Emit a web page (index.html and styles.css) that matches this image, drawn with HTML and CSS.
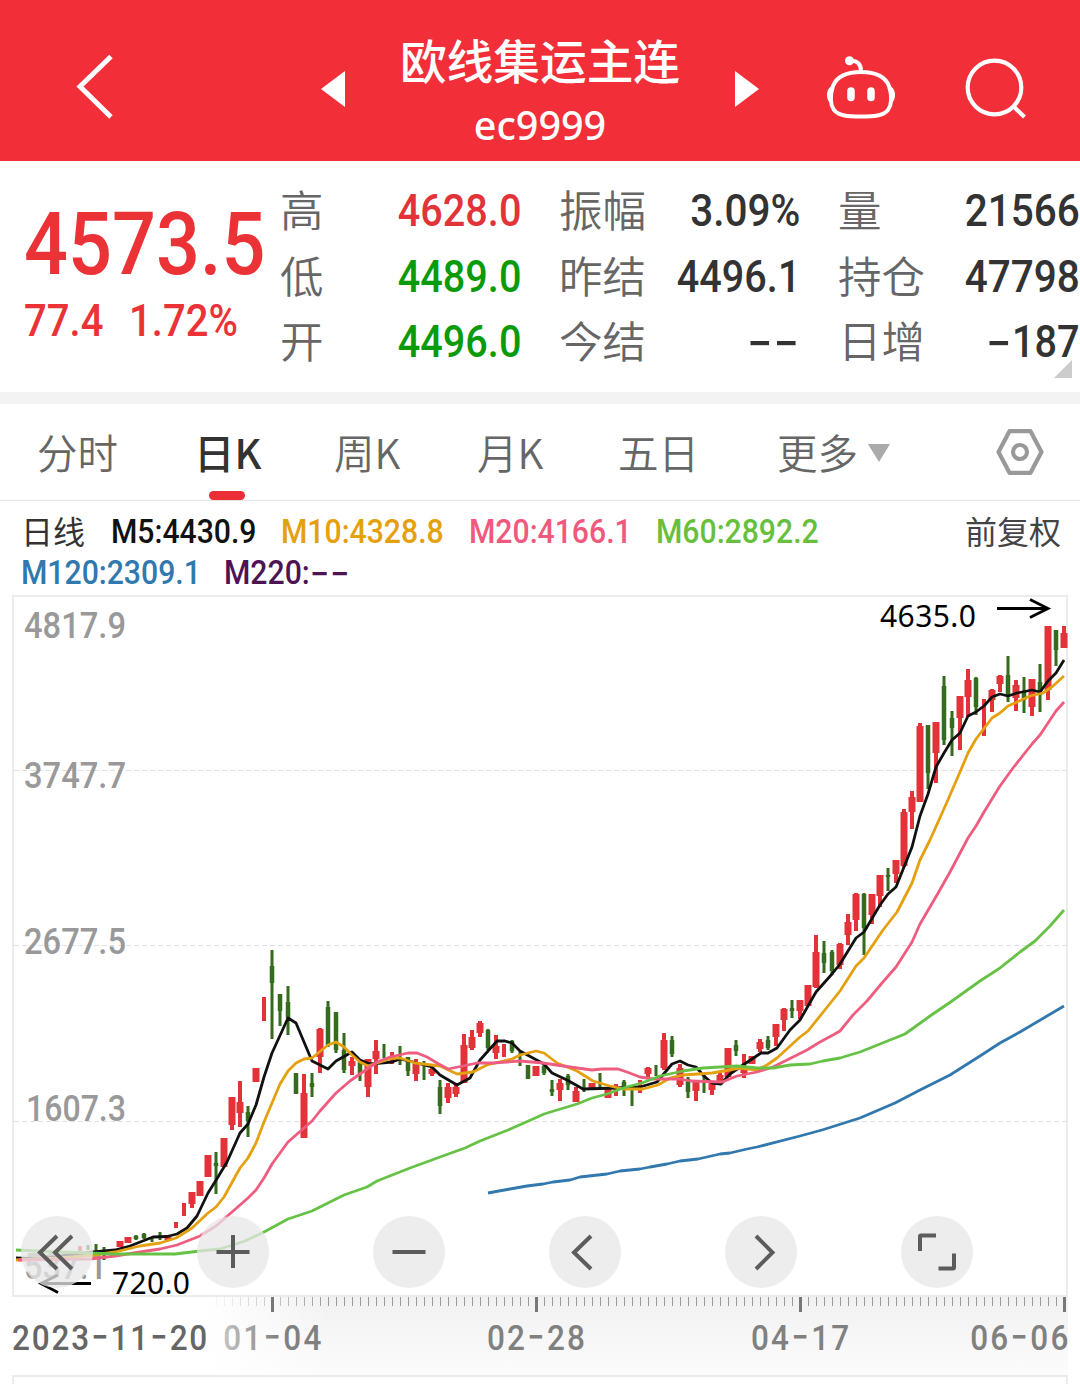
FILE: index.html
```html
<!DOCTYPE html>
<html lang="zh-CN">
<head>
<meta charset="utf-8">
<title>欧线集运主连 ec9999</title>
<link rel="stylesheet" href="styles.css">
</head>
<body>
<header class="topbar">
  <svg class="cell" viewBox="0 0 300 161" fill="none" stroke="#fff" stroke-width="5"><path d="M111 56.5 80 86.5 111 117"/></svg>
  <svg class="cell" viewBox="300 0 70 161"><path d="M321 89 345 71V107Z" fill="#fff"/></svg>
  <div class="title"><h1>欧线集运主连</h1><p>ec9999</p></div>
  <svg class="cell" viewBox="710 0 80 161"><path d="M759 89 735 71V107Z" fill="#fff"/></svg>
  <svg class="cell" viewBox="790 0 130 161" fill="none" stroke="#fff" stroke-width="4">
    <path d="M861 72C874 72 885 76 889 86C892 95 892 104 888 110C883 116 874 116.500 861 116.500S839 116 834 110C830 104 830 95 833 86C837 76 848 72 861 72Z"/>
    <path d="M850 61C857 60 861 64 861 71"/>
    <circle cx="849.500" cy="60.700" r="4.500" fill="#fff" stroke="none"/>
    <path d="M832 86.500C826 88 826 102 832 103.500ZM890 86.500C896 88 896 102 890 103.500Z" fill="#fff" stroke-width="1"/>
    <path d="M851 91V97.500M871 91V97.500" stroke-width="7.500" stroke-linecap="round"/>
  </svg>
  <svg class="cell" viewBox="920 0 160 161" fill="none" stroke="#fff" stroke-width="4.200"><circle cx="994.500" cy="87.500" r="26.800"/><path d="M1013 106 1024.500 117"/></svg>
</header>

<section class="quote">
  <div class="price">
    <div class="last"><span class="num">4573.5</span></div>
    <div class="change"><span class="num">77.4</span><span class="num">1.72%</span></div>
  </div>
  <dl class="stats">
    <div><dt>高</dt><dd class="up">4628.0</dd></div>
    <div><dt>振幅</dt><dd class="wide">3.09%</dd></div>
    <div><dt>量</dt><dd class="wide">21566</dd></div>
    <div><dt>低</dt><dd class="down">4489.0</dd></div>
    <div><dt>昨结</dt><dd>4496.1</dd></div>
    <div><dt>持仓</dt><dd class="wide">47798</dd></div>
    <div><dt>开</dt><dd class="down">4496.0</dd></div>
    <div><dt>今结</dt><dd><span class="dash">--</span></dd></div>
    <div><dt>日增</dt><dd><span class="dash">-</span>187</dd></div>
  </dl>
  <i class="corner"></i>
</section>

<nav class="tabs">
  <a>分时</a><a class="on">日K</a><a>周K</a><a>月K</a><a>五日</a><a>更多<i class="caret"></i></a>
  <svg class="gear" viewBox="0 0 48 48" fill="none" stroke="#999" stroke-width="4.200" stroke-linejoin="round"><path d="M13.500 3.200H34.500L45.500 24 34.500 44.800H13.500L2.500 24Z"/><circle cx="24" cy="24" r="7"/></svg>
</nav>

<section class="legend">
  <div class="row"><b>日线</b><span class="num m5">M5:4430.9</span><span class="num m10">M10:4328.8</span><span class="num m20">M20:4166.1</span><span class="num m60">M60:2892.2</span><em>前复权</em></div>
  <div class="row"><span class="num m120">M120:2309.1</span><span class="num m220">M220:<span class="dash">--</span></span></div>
</section>

<main class="chart">
<svg class="plot" viewBox="0 595 1080 789">
  <defs>
    <linearGradient id="down" x1="0" y1="0" x2="0" y2="1"><stop offset="0" stop-color="#f1f1f1"/><stop offset="1" stop-color="#fcfcfc"/></linearGradient>
    <linearGradient id="fade" gradientUnits="userSpaceOnUse" x1="205" y1="0" x2="330" y2="0"><stop offset="0" stop-color="#fff"/><stop offset="1" stop-color="#fff" stop-opacity="0"/></linearGradient>
    <linearGradient id="textfade" gradientUnits="userSpaceOnUse" x1="239" y1="0" x2="310" y2="0"><stop offset="0" stop-color="#ccc"/><stop offset="1" stop-color="#808080"/></linearGradient>
    <pattern id="tick" x="216" y="1297" width="8" height="10" patternUnits="userSpaceOnUse"><path d="M.5 0V9" stroke="#999"/></pattern>
  </defs>
  <rect x="12" y="1297" width="1056" height="78" fill="url(#down)"/>
  <rect x="216" y="1297" width="852" height="9" fill="url(#tick)"/>
  <rect x="12" y="1297" width="400" height="78" fill="url(#fade)"/>
  <path d="M272.500 1297V1312M536.500 1297V1312M800.500 1297V1312M1064.500 1297V1312" stroke="#777" stroke-width="3"/>
  <path d="M13 1296V596H1067V1296ZM13 1384V1376H1067V1384" fill="none" stroke="#ebebeb" stroke-width="2"/>
  <path d="M14 770.500H1066M14 945.500H1066M14 1121.500H1066" stroke="#e0e0e0" stroke-dasharray="5 3"/>
  <g class="scale">
    <text x="24" y="638" textLength="102" lengthAdjust="spacingAndGlyphs">4817.9</text>
    <text x="24" y="788" textLength="102" lengthAdjust="spacingAndGlyphs">3747.7</text>
    <text x="24" y="954" textLength="102" lengthAdjust="spacingAndGlyphs">2677.5</text>
    <text x="26" y="1121" textLength="100" lengthAdjust="spacingAndGlyphs">1607.3</text>
    <text x="24" y="1279" textLength="83" lengthAdjust="spacingAndGlyphs">537.1</text>
  </g>
  <!-- candles: wicks, then bodies -->
  <path class="rw" d="M80 1246V1251M176 1222V1228M184 1203V1216M192 1192V1208M232 1097V1130M240 1081V1127M264 997V1021M304 1074V1138M320 1028V1073M352 1057V1075M368 1059V1097M376 1040V1074M392 1052V1064M416 1059V1081M432 1067V1076M448 1083V1103M456 1085V1097M464 1034V1083M472 1030V1050M480 1021V1037M496 1035V1059M504 1044V1057M560 1079V1101M576 1087V1102M616 1084V1096M640 1080V1093M648 1067V1077M664 1033V1070M680 1064V1087M696 1082V1101M712 1082V1095M720 1073V1083M744 1054V1078M760 1039V1052M776 1024V1046M784 1008V1031M800 1000V1019M816 935V988M840 943V969M848 914V945M856 893V931M872 894V924M880 875V907M896 860V883M904 809V867M912 791V829M920 723V802M936 722V783M960 696V750M968 669V717M984 699V736M992 689V712M1000 675V692M1016 680V711M1032 679V716M1048 626V700M1064 626V648"/>
  <path class="rb" d="M120 1241V1247M128 1237V1243M168 1237V1240M192 1192V1204M200 1181V1196M208 1155V1177M224 1138V1167M232 1097V1125M240 1102V1113M256 1068V1082M304 1093V1138M320 1029V1057M352 1061V1066M368 1059V1087M376 1051V1059M416 1064V1074M432 1069V1074M448 1087V1098M456 1087V1094M464 1045V1083M472 1037V1048M480 1023V1033M496 1046V1053M536 1066V1076M560 1083V1090M576 1091V1102M592 1083V1088M608 1088V1098M648 1068V1074M664 1040V1068M680 1068V1085M696 1082V1091M712 1082V1090M720 1075V1082M728 1048V1077M744 1068V1073M752 1056V1064M760 1042V1049M776 1024V1037M784 1009V1020M800 1000V1011M808 985V1006M816 952V987M840 944V965M848 922V935M856 894V920M872 894V915M880 875V896M896 860V874M904 812V866M912 797V812M920 726V802M936 722V753M960 696V718M968 680V697M992 690V700M1000 676V684M1016 685V698M1032 679V707M1048 626V690M1064 633V648"/>
  <path class="gw" d="M88 1245V1250M96 1244V1252M104 1247V1260M136 1235V1240M144 1233V1239M152 1237V1242M160 1232V1240M216 1152V1194M248 1106V1137M272 950V1039M280 994V1026M288 986V1035M312 1073V1097M328 1001V1047M336 1012V1053M344 1033V1073M360 1062V1081M384 1044V1058M400 1046V1065M408 1057V1076M424 1061V1080M440 1080V1114M488 1029V1050M512 1040V1053M520 1052V1066M544 1064V1075M552 1080V1096M568 1074V1090M584 1079V1092M600 1073V1087M624 1080V1096M632 1089V1106M656 1065V1076M672 1036V1057M688 1077V1098M704 1075V1093M736 1040V1056M768 1036V1050M792 1000V1018M824 941V973M832 950V975M864 893V955M888 868V891M928 725V789M944 676V745M952 711V756M976 677V715M1008 656V702M1024 677V713M1040 664V712M1056 630V666"/>
  <path class="gb" d="M136 1236V1239M144 1234V1238M216 1163V1166M248 1112V1121M272 966V983M280 994V1011M288 1002V1018M296 1073V1094M312 1083V1087M328 1007V1045M336 1012V1050M344 1050V1070M360 1062V1074M408 1057V1071M440 1087V1106M488 1030V1048M512 1041V1051M528 1065V1079M544 1066V1073M552 1089V1092M568 1076V1085M624 1082V1090M672 1040V1054M688 1079V1092M736 1045V1051M768 1040V1048M792 1008V1011M824 953V963M832 952V971M864 894V928M888 875V877M928 725V773M944 686V740M952 718V728M976 678V707M1008 675V695M1024 691V700M1040 682V695M1056 630V650"/>
  <!-- moving averages -->
  <polyline class="ma k" points="16,1258 40,1259 70,1255 93,1252 115,1250 130,1246 153,1237 167,1236.500 177,1234 187,1228 197,1216 208,1193 218,1177 227,1162 240,1133 248,1124 256,1105 264,1077 272,1053 288,1018 296,1023 312,1061 328,1069 336,1061 352,1052 360,1060 370,1064 392,1062 400,1059 413,1062 432,1067 440,1075 457,1085 470,1078 480,1060 497,1041 505,1041 512,1043 520,1051 544,1064 552,1073 567,1080 583,1089 617,1088 640,1087 657,1082 672,1064 680,1061 688,1065 696,1067 704,1076 712,1083 721,1084 730,1074 743,1065 761,1053 768,1053 777,1048 790,1030 800,1020 808,1006 816,992 824,983 832,974 840,964 848,951 856,938 864,932 880,905 888,894 896,887 904,867 912,847 920,816 928,794 936,767 944,753 952,740 960,733 968,716 976,712 984,706 992,697 1000,694 1008,696 1017,693 1032,690 1040,692 1048,681 1056,673 1064,660"/>
  <polyline class="ma o" points="16,1260 60,1258 95,1255 115,1252 140,1246 160,1243 176,1238 192,1228 208,1213 216,1207 224,1197 240,1168 248,1158 256,1143 264,1122 272,1103 280,1084 288,1071 296,1063 304,1059 312,1058 328,1045 336,1042 344,1047 352,1055 360,1062 368,1066 377,1063 393,1058 400,1058 415,1063 440,1066 457,1074 473,1072 487,1065 512,1059 520,1055 536,1051 544,1053 557,1063 577,1071 593,1081 610,1086 623,1089 643,1089 658,1085 670,1078 683,1075 712,1073 740,1068 757,1070 767,1065 777,1058 800,1037 808,1031 824,1011 840,991 856,966 864,958 883,930 897,912 912,883 920,860 930,840 947,802 960,772 968,753 976,739 992,718 1000,713 1008,706 1017,702 1030,696 1043,693 1053,686 1064,676"/>
  <polyline class="ma p" points="18,1260 90,1259 115,1256 140,1252 160,1249 177,1245 200,1236 216,1226 232,1212 248,1198 256,1190 264,1178 272,1164 288,1142 312,1121 320,1111 336,1093 350,1081 367,1069 377,1062 390,1057 408,1053 417,1053 427,1057 437,1063 448,1069 463,1066 477,1063 493,1063 520,1061 543,1063 570,1067 592,1070 602,1069 618,1069 627,1072 640,1077 653,1079 680,1079 690,1081 722,1082 737,1076 757,1072 773,1067 787,1060 807,1050 820,1042 833,1035 840,1031 853,1015 867,1001 882,983 896,967 912,942 920,924 937,895 950,872 968,838 976,826 984,812 1000,786 1013,768 1032,744 1040,735 1056,711 1064,702"/>
  <polyline class="ma g" points="16,1250 60,1252 115,1254 175,1254 200,1251 220,1249 245,1241 264,1232 288,1219 312,1211 328,1203 344,1195 367,1187 377,1181 410,1168 440,1157 465,1148 480,1141 508,1130 533,1119 544,1114 567,1107 577,1104 592,1098 607,1094 623,1088 642,1083 660,1076 683,1071 703,1068 737,1066 757,1068 773,1068 790,1065 810,1064 823,1061 840,1058 860,1052 880,1044 905,1034 930,1016 952,1001 980,981 1000,968 1020,952 1035,941 1050,926 1064,910"/>
  <polyline class="ma b" points="488,1193 510,1189 527,1186 543,1184 553,1182 570,1180 580,1177 607,1174 620,1171 640,1169 650,1167 667,1164 680,1161 698,1159 720,1154 730,1153 747,1149 757,1147 800,1136 822,1130 860,1118 895,1103 920,1090 950,1075 980,1056 1000,1043 1020,1032 1064,1006"/>
  <path class="arrow" d="M997 608.500H1048M1030 599.500 1048 608.500 1030 617.500M91 1283.500H41M58 1275 41 1283.500 58 1292.500"/>
  <g class="mark"><text x="880" y="627" textLength="96">4635.0</text><text x="112" y="1293.500" textLength="78">720.0</text></g>
  <g class="dates" transform="scale(.9 1)">
    <text x="13.300" y="1350" fill="#666" textLength="217">2023<tspan class="dash">-</tspan>11<tspan class="dash">-</tspan>20</text>
    <text x="248" y="1350" fill="url(#textfade)" textLength="109">01<tspan class="dash">-</tspan>04</text>
    <text x="541" y="1350" textLength="109">02<tspan class="dash">-</tspan>28</text>
    <text x="834.500" y="1350" textLength="109">04<tspan class="dash">-</tspan>17</text>
    <text x="1078" y="1350" textLength="109">06<tspan class="dash">-</tspan>06</text>
  </g>
</svg>
<div class="tools">
  <button><svg viewBox="0 0 72 72"><path d="M36 20 19 36.500 36 53M51 20 34 36.500 51 53"/></svg></button>
  <button><svg viewBox="0 0 72 72"><path d="M36 19V52M19.500 36H52.500"/></svg></button>
  <button><svg viewBox="0 0 72 72"><path d="M19.500 36H52.500"/></svg></button>
  <button><svg viewBox="0 0 72 72"><path d="M42 20 25 36.500 42 53"/></svg></button>
  <button><svg viewBox="0 0 72 72"><path d="M31 20 47.500 36.500 31 53"/></svg></button>
  <button><svg viewBox="0 0 72 72"><path d="M19 35V20.500Q19 19.500 20 19.500H35M37.500 52.500H52Q53 52.500 53 51.500V37.500"/></svg></button>
</div>
</main>
</body>
</html>
```
FILE: styles.css
```css
* { box-sizing: border-box; }
body { margin: 0; width: 1080px; height: 1384px; overflow: hidden; background: #fff; color: #333; font-family: Roboto, "Noto Sans CJK SC", sans-serif; }
h1, p, dl, dt, dd { margin: 0; font-weight: 400; }
svg { display: block; }

.topbar { display: grid; grid-template-columns: 300px 70px 340px 80px 130px 160px; height: 161px; background: #f22f38; color: #fff; }
.cell { width: 100%; height: 161px; }
.title { text-align: center; padding-top: 28px; }
.title h1 { font: 500 46.700px/62px "Noto Sans CJK SC", sans-serif; white-space: nowrap; }
.title p { font: 500 39.500px/70px "Noto Sans", sans-serif; }

.num { display: inline-block; transform: scaleX(.9); transform-origin: left; font-weight: 500; white-space: nowrap; }
.dash { display: inline-block; font-family: Inter, sans-serif; transform: scaleX(1.450); transform-origin: right; line-height: 1; }

.quote { position: relative; display: grid; grid-template-columns: 281px 1fr; height: 231px; padding-top: 17px; }
.price { color: #eb3237; padding: 16px 0 0 24px; }
.last { font-size: 87px; line-height: 100px; height: 100px; }
.price .num { transform: scaleX(.89); }
.change { display: grid; grid-template-columns: 105px 130px; font-size: 45px; line-height: 54px; }
.stats { display: grid; grid-template-columns: 240px 240px 241px; column-gap: 39px; grid-auto-rows: 65.500px; }
.stats div { display: flex; justify-content: space-between; align-items: center; height: 65.500px; }
.stats dt { font: 350 43.500px/61px "Noto Sans CJK SC", sans-serif; padding-bottom: 4px; margin-left: -1px; color: #666; white-space: nowrap; }
.stats dd { font-size: 45px; font-weight: 500; line-height: 65px; transform: scaleX(.88); transform-origin: right; white-space: nowrap; }
.stats .wide { transform: scaleX(.9); }
.stats .up { color: #e23338; }
.stats .down { color: #0a9a0a; }
.corner { position: absolute; right: 8px; bottom: 14px; border: 9px solid; border-color: transparent #ccc #ccc transparent; }

.tabs { display: flex; height: 109px; border-top: 12px solid #f3f3f3; border-bottom: 1px solid #e6e6e6; padding-left: 37px; font: 350 40.500px/95px "Noto Sans CJK SC", sans-serif; color: #666; }
.tabs a { position: relative; white-space: nowrap; width: 143px; }
.tabs a:nth-child(1) { width: 157px; }
.tabs a:nth-child(2) { width: 140px; }
.tabs a:nth-child(4) { width: 141px; }
.tabs a:nth-child(5) { width: 159px; }
.tabs a:nth-child(6) { width: 219px; }
.tabs .on { color: #333; font-weight: 500; }
.tabs .on::after { content: ""; position: absolute; left: 15px; bottom: 0; width: 36px; height: 9px; border-radius: 5px; background: #ec2f36; }
.caret { display: inline-block; margin-left: 10px; vertical-align: 7px; border: 11px solid transparent; border-top: 18px solid #aaa; border-bottom: 0; }
.gear { width: 48px; height: 48px; margin-top: 24px; }

.legend { height: 94px; padding: 10px 19px 0 21px; font-size: 33.500px; }
.row { display: flex; height: 41px; line-height: 41px; }
.row b { font: 400 32px/38px "Noto Sans CJK SC", sans-serif; width: 90px; }
.row em { font: 400 32px/38px "Noto Sans CJK SC", sans-serif; margin-left: auto; color: #444; }
.m5 { color: #111; width: 170px; }
.m10 { color: #e5a00d; width: 188px; }
.m20 { color: #f0597e; width: 187px; }
.m60 { color: #66c03c; }
.m120 { color: #3078ad; width: 203px; }
.m220 { color: #4e1353; }
.m220 .dash { transform-origin: left; }

.chart { position: relative; height: 789px; }
.plot { width: 1080px; height: 789px; }
.plot text { font-family: Roboto, sans-serif; font-weight: 500; }
.plot .dash { font-family: Inter, sans-serif; font-size: 43px; font-weight: 400; }
.scale text { font-size: 36px; fill: #999; }
.dates { font-size: 35px; fill: #808080; }
.plot .mark text { font: 400 30px "Noto Sans", sans-serif; fill: #000; }
.rw, .rb { stroke: #e23338; }
.gw, .gb { stroke: #356b1c; }
.rw { stroke-width: 4; }
.rb { stroke-width: 7; }
.gw { stroke-width: 3; }
.gb { stroke-width: 4.500; }
.ma { fill: none; stroke-width: 2.800; stroke-linejoin: round; }
.k { stroke: #111; }
.o { stroke: #e5a010; }
.p { stroke: #ee5d7f; }
.g { stroke: #66c245; }
.b { stroke: #3078ad; }
.arrow { fill: none; stroke: #000; stroke-width: 2.800; }
.tools { position: absolute; left: 21px; top: 621px; display: flex; gap: 104px; }
.tools button { width: 72px; height: 72px; padding: 0; border: 0; border-radius: 50%; background: rgba(231, 231, 231, .76); }
.tools svg { width: 72px; height: 72px; fill: none; stroke: #5c5c5c; stroke-width: 4; }
```
